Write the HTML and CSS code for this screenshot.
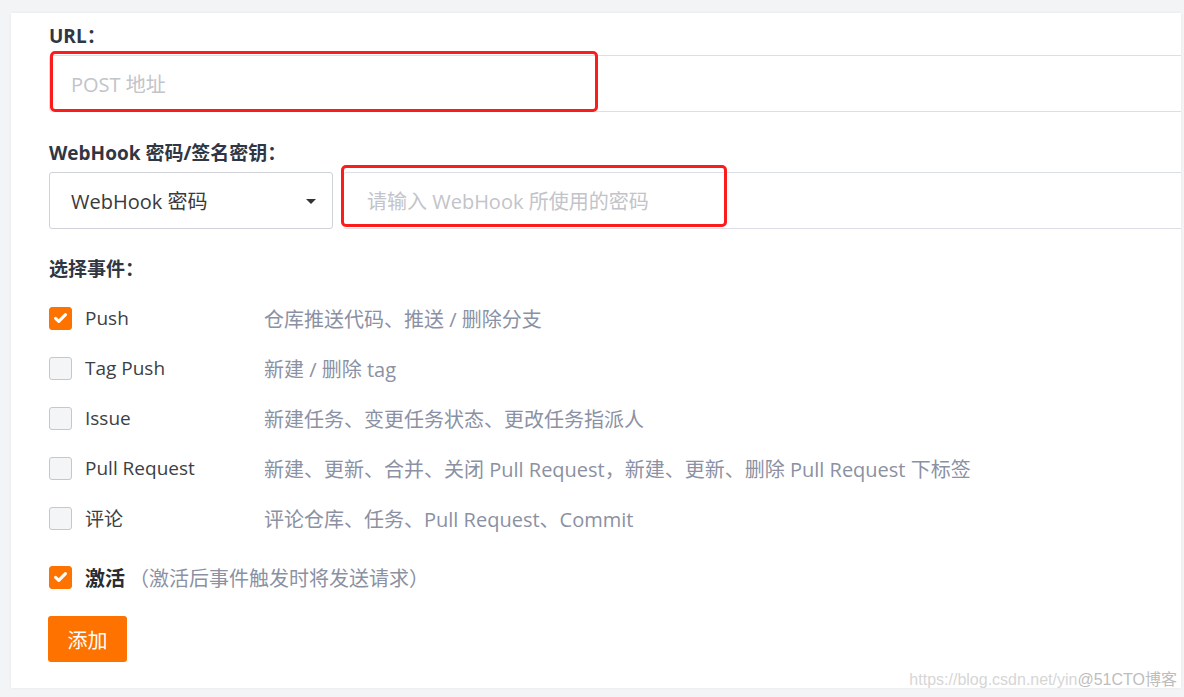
FILE: index.html
```html
<!DOCTYPE html>
<html lang="zh-CN">
<head>
<meta charset="utf-8">
<title>WebHook</title>
<link rel="stylesheet" href="styles.css">
</head>
<body>
<div class="card">
  <div class="group">
    <div class="label">URL：</div>
    <div class="field-row">
      <div class="input input-full"><span class="ph">POST 地址</span></div>
      <div class="mark mark-url"></div>
    </div>
  </div>

  <div class="group group-2">
    <div class="label">WebHook 密码/签名密钥：</div>
    <div class="field-row">
      <div class="select"><span>WebHook 密码</span><i class="caret"></i></div>
      <div class="input input-pass"><span class="ph">请输入 WebHook 所使用的密码</span></div>
      <div class="mark mark-pass"></div>
    </div>
  </div>

  <div class="group group-3">
    <div class="label">选择事件：</div>
    <ul class="events">
      <li class="event"><span class="cb on"><svg viewBox="0 0 22 22"><path d="M5.8 11.3l3.4 3.3L16.2 7.5" /></svg></span><span class="ev-name">Push</span><span class="ev-desc">仓库推送代码、推送 / 删除分支</span></li>
      <li class="event"><span class="cb"></span><span class="ev-name">Tag Push</span><span class="ev-desc">新建 / 删除 tag</span></li>
      <li class="event"><span class="cb"></span><span class="ev-name">Issue</span><span class="ev-desc">新建任务、变更任务状态、更改任务指派人</span></li>
      <li class="event"><span class="cb"></span><span class="ev-name">Pull Request</span><span class="ev-desc">新建、更新、合并、关闭 Pull Request，新建、更新、删除 Pull Request 下标签</span></li>
      <li class="event"><span class="cb"></span><span class="ev-name">评论</span><span class="ev-desc">评论仓库、任务、Pull Request、Commit</span></li>
    </ul>
  </div>

  <div class="activate">
    <span class="cb on"><svg viewBox="0 0 22 22"><path d="M5.8 11.3l3.4 3.3L16.2 7.5" /></svg></span>
    <span class="act-name">激活</span>
    <span class="act-desc">（激活后事件触发时将发送请求）</span>
  </div>

  <button class="btn" type="button">添加</button>

  <div class="watermark"><span class="wm-url">https://blog.csdn.net/yin</span><span class="wm-site">@51CTO博客</span></div>
</div>
</body>
</html>
```

FILE: styles.css
```css
* { box-sizing: border-box; }

html, body {
  margin: 0;
  padding: 0;
}

body {
  background: #f3f4f5;
  font-family: "Open Sans", "Noto Sans CJK SC", sans-serif;
  width: 1184px;
  height: 697px;
  overflow: hidden;
}

.card {
  position: relative;
  margin: 13px 0 0 11px;
  width: 1170px;
  height: 675px;
  background: #fff;
  overflow: hidden;
  padding: 11px 0 0 38px;
  box-shadow: 0 0 3px rgba(0, 0, 0, 0.06);
}

.label {
  font-size: 19px;
  font-weight: 700;
  color: #303643;
  line-height: 24px;
  height: 24px;
}

.field-row {
  position: relative;
  display: flex;
  margin-top: 7px;
  gap: 10px;
  width: 1400px;
}

.input {
  height: 57px;
  border: 1px solid #dcdfe6;
  border-radius: 3px;
  display: flex;
  align-items: center;
  padding-left: 21px;
  background: #fff;
}

.input-full { width: 1300px; }
.input-pass { width: 1000px; padding-left: 23px; }

.ph {
  font-size: 20px;
  color: #c2c4c9;
}

.select {
  flex: none;
  width: 284px;
  height: 57px;
  border: 1px solid #cfd2d9;
  border-radius: 3px;
  display: flex;
  align-items: center;
  justify-content: space-between;
  padding: 0 16px 0 21px;
  font-size: 20px;
  color: #3a3a3a;
}

.caret {
  width: 0;
  height: 0;
  border-left: 5.5px solid transparent;
  border-right: 5.5px solid transparent;
  border-top: 5.5px solid #333;
  margin-top: 1px;
}

.mark {
  position: absolute;
  border: 3px solid #fb1c1c;
  border-radius: 5px;
  pointer-events: none;
}

.mark-url {
  left: 1px;
  top: -4px;
  width: 548px;
  height: 61px;
}

.mark-pass {
  left: 292px;
  top: -7px;
  width: 386px;
  height: 62px;
}

.group-2 { margin-top: 29px; }
.group-3 { margin-top: 28px; }

.events {
  list-style: none;
  margin: 12px 0 0;
  padding: 0;
}

.event {
  display: flex;
  align-items: center;
  height: 50px;
}

.cb {
  flex: none;
  width: 23px;
  height: 23px;
  border: 1px solid #c4c7ce;
  border-radius: 3px;
  background: #f4f5f7;
  display: flex;
  align-items: center;
  justify-content: center;
}

.cb.on {
  background: #fe7300;
  border-color: #fe7300;
}

.cb svg {
  width: 22px;
  height: 22px;
  fill: none;
  stroke: #fff;
  stroke-width: 3.2;
  stroke-linecap: round;
  stroke-linejoin: round;
}

.ev-name {
  flex: none;
  width: 192px;
  padding-left: 13px;
  font-size: 19px;
  color: #3c3f46;
}

.ev-desc {
  font-size: 20px;
  color: #8b91a3;
}

.activate {
  display: flex;
  align-items: center;
  height: 50px;
  margin-top: 9px;
}

.act-name {
  padding-left: 13px;
  font-size: 20px;
  font-weight: 700;
  color: #2a2c31;
  font-family: "Noto Sans CJK SC", sans-serif;
}

.act-desc {
  padding-left: 4px;
  font-size: 20px;
  color: #8b91a3;
  font-family: "Noto Sans CJK SC", sans-serif;
}

.btn {
  display: block;
  margin: 14px 0 0 -1px;
  width: 79px;
  height: 46px;
  border: none;
  border-radius: 3px;
  background: #fe7300;
  color: #fff;
  font-size: 20px;
  font-family: "Noto Sans CJK SC", sans-serif;
  padding: 0;
}

.watermark {
  position: absolute;
  right: 4px;
  bottom: -4px;
  font-family: "Liberation Sans", "Noto Sans CJK SC", sans-serif;
  font-size: 16px;
  line-height: 24px;
}

.wm-url { color: #d6d6d6; }
.wm-site { color: #bdbdbd; }
```
